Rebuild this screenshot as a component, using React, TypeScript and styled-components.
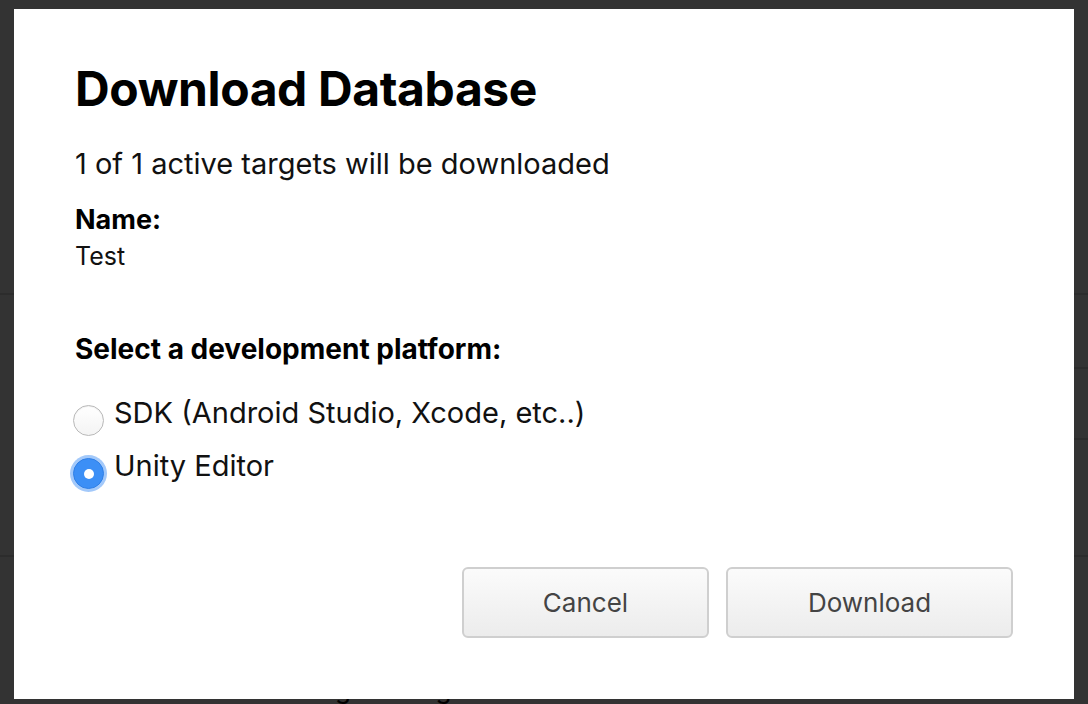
// Download Database modal shown over a dimmed page
import styled, { createGlobalStyle } from "styled-components";

const GlobalStyle = createGlobalStyle`
  html, body {
    margin: 0;
    padding: 0;
    width: 100%;
    height: 100%;
    overflow: hidden;
    background: #333333;
  }
  #root {
    height: 100%;
  }
`;

// The dimmed page that sits behind the dialog
const Page = styled.div`
  height: 704px;
  display: flex;
  flex-direction: column;
  background: #333333;
`;

const PageRow = styled.div<{ $h: number }>`
  height: ${(p) => p.$h}px;
  border-bottom: 2px solid #2c2c2c;
  display: flex;
  justify-content: flex-end;
`;

const SideColumn = styled.div`
  width: 80px;
  display: flex;
  flex-direction: column;
`;

const SideCell = styled.div<{ $h: number }>`
  height: ${(p) => p.$h}px;
  border-bottom: 2px solid #2c2c2c;
`;

// only the descenders of this line show under the dialog
const PageText = styled.div`
  padding: 0 0 0 335px;
  margin-top: 116px;
  font-family: "Inter", "Liberation Sans", sans-serif;
  font-size: 26px;
  line-height: 31px;
  color: #000;
  white-space: nowrap;
`;

// The dialog itself lies over the page
const Modal = styled.div`
  position: fixed;
  left: 14px;
  top: 9px;
  width: 1060px;
  height: 690px;
  box-sizing: border-box;
  background: #ffffff;
  padding: 48px 61px 0 61px;
  font-family: "Inter", "Liberation Sans", sans-serif;
  color: #111;
  display: flex;
  flex-direction: column;
`;

const Title = styled.h1`
  margin: 0;
  font-size: 48px;
  font-weight: 700;
  letter-spacing: -0.4px;
  color: #000;
  line-height: 64px;
`;

const Subtitle = styled.p`
  margin: 25px 0 0 0;
  font-size: 29px;
  line-height: 36px;
`;

const Label = styled.div<{ $top: number; $size: number }>`
  margin-top: ${(p) => p.$top}px;
  font-size: ${(p) => p.$size}px;
  font-weight: 700;
  line-height: 34px;
  color: #000;
`;

const Value = styled.div`
  margin-top: 2px;
  font-size: 25px;
  line-height: 34px;
`;

const Options = styled.div`
  margin-top: 29px;
  display: flex;
  flex-direction: column;
  gap: 12px;
`;

const Option = styled.label`
  display: flex;
  align-items: flex-start;
  gap: 10px;
  font-size: 29px;
  line-height: 36px;
  margin-left: -2px;
`;

const Radio = styled.span<{ $checked?: boolean }>`
  width: 31px;
  height: 31px;
  box-sizing: border-box;
  border-radius: 50%;
  flex: none;
  margin-top: 10px;
  position: relative;
  ${(p) =>
    p.$checked
      ? `
    background: #3c8ff6;
    border: 1px solid #2f7fe6;
    box-shadow: 0 0 0 3px #a3c9fa;
    &::after {
      content: "";
      position: absolute;
      left: 50%;
      top: 50%;
      width: 10px;
      height: 10px;
      margin: -5px 0 0 -5px;
      border-radius: 50%;
      background: #fff;
    }
  `
      : `
    background: linear-gradient(#ffffff, #f4f4f4);
    border: 1px solid #b9b9b9;
    box-shadow: inset 0 1px 1px rgba(0,0,0,0.06);
  `}
`;

const Footer = styled.div`
  margin-top: 78px;
  display: flex;
  justify-content: flex-end;
  gap: 17px;
`;

const Button = styled.button<{ $w: number }>`
  width: ${(p) => p.$w}px;
  height: 71px;
  border: 2px solid #cfcfcf;
  border-radius: 6px;
  background: linear-gradient(#fbfbfb, #ececec);
  font-family: "Inter", "Liberation Sans", sans-serif;
  font-size: 26px;
  color: #444;
  cursor: pointer;
`;

const App = () => {
  return (
    <>
      <GlobalStyle />
      <Page>
        <PageRow $h={294} />
        <PageRow $h={260}>
          <SideColumn>
            <SideCell $h={72} />
            <SideCell $h={69} />
          </SideColumn>
        </PageRow>
        <PageText>gone to get</PageText>
      </Page>

      <Modal>
        <Title>Download Database</Title>
        <Subtitle>1 of 1 active targets will be downloaded</Subtitle>
        <Label $top={21} $size={27}>
          Name:
        </Label>
        <Value>Test</Value>
        <Label $top={59} $size={28}>
          Select a development platform:
        </Label>
        <Options>
          <Option>
            <Radio />
            SDK (Android Studio, Xcode, etc..)
          </Option>
          <Option>
            <Radio $checked />
            Unity Editor
          </Option>
        </Options>
        <Footer>
          <Button $w={247}>Cancel</Button>
          <Button $w={287}>Download</Button>
        </Footer>
      </Modal>
    </>
  );
};

export default App;
